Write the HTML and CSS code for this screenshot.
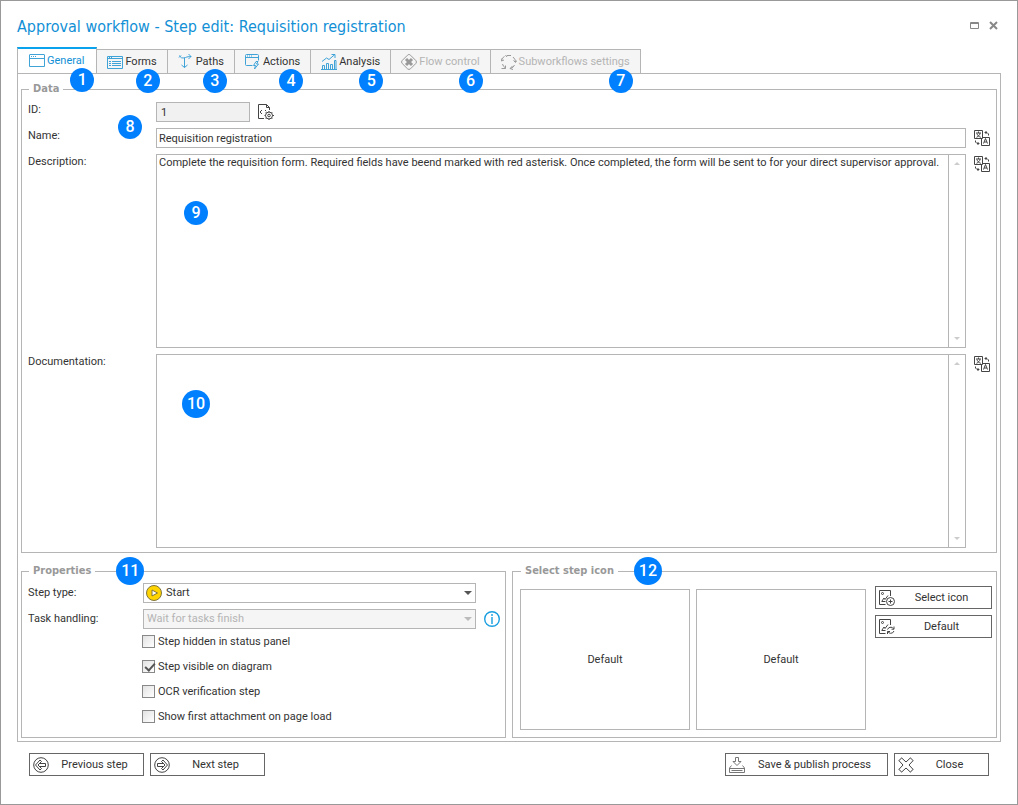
FILE: index.html
```html
<!DOCTYPE html>
<html lang="en">
<head>
<meta charset="utf-8">
<title>Approval workflow - Step edit</title>
<link rel="stylesheet" href="styles.css">
</head>
<body>
<svg class="defs" aria-hidden="true">
  <symbol id="translate" viewBox="0 0 16 16">
    <path d="M.5.5h8v8h-8zM7.500 8.500v7h8v-8h-7" />
    <path d="M2 3h5M4.500 1.500V3M2.500 7.300C4.500 6.300 6 5 6 3M3 3.500c.3 1.800 2 3.200 3.800 3.800M9.500 13.500l2-5 2 5M10.200 12h2.600" />
    <path d="M14.500 5.500V4L13 2.500h-2M12.500 1L11 2.500 12.500 4M1.500 10.500V12L3 13.500h2M3.500 12L5 13.500 3.500 15" />
  </symbol>
  <symbol id="picture" viewBox="0 0 16 16">
    <path d="M11.500 6V.5H.5v14h6" />
    <path d="M2.500 3.500a1 1 0 1 0 2 0 1 1 0 1 0-2 0M2.500 11.500h4M3 11l2-3 1 1.500 3-4" />
  </symbol>
  <symbol id="up" viewBox="0 0 6 3"><path d="M0 3l3-3 3 3z" /></symbol>
  <symbol id="down" viewBox="0 0 8 4"><path d="M0 0h8L4 4z" /></symbol>
</svg>
<main class="window">
  <header class="titlebar">
    <h1 class="title">Approval workflow - Step edit: Requisition registration</h1>
    <div class="controls">
      <button class="control" type="button" aria-label="Maximize"><svg class="i10" viewBox="0 0 10 10"><path d="M.5 1.500h8v6h-8zM.5 2.500h8" /></svg></button>
      <button class="control" type="button" aria-label="Close window"><svg class="i10 thick" viewBox="0 0 10 10"><path d="M1 1l7 7M8 1L1 8" /></svg></button>
    </div>
  </header>

  <nav class="tabs">
    <button class="tab active" type="button"><svg class="icon blue" viewBox="0 0 16 16"><path d="M.5 2v11.500h15V2a.5.5 0 0 0-.5-.5H1a.5.5 0 0 0-.5.5zM.5 5.500h15M2 3.500h1M4 3.500h1M6 3.500h1" /></svg>General<span class="badge">1</span></button>
    <button class="tab" type="button"><svg class="icon blue" viewBox="0 0 16 16"><path d="M.5 2.500h15v12H.5zM.5 4.500h15M2 7.500h2M2 9.500h2M2 11.500h2M5 7.500h9M5 9.500h9M5 11.500h9M2 3.500h1M4 3.500h1" /></svg>Forms<span class="badge">2</span></button>
    <button class="tab" type="button"><svg class="icon blue" viewBox="0 0 16 16"><path d="M1.500 1.500c1 2.500 2.500 3 6 2 2-.7 3-1 5.500-1M10.500 0l2.500 2.500L10.500 5M6.500 4v9.500M3.500 11l3 2.500 3-2.500M1 3.500l2-2" /></svg>Paths<span class="badge">3</span></button>
    <button class="tab" type="button"><svg class="icon blue" viewBox="0 0 16 16"><path d="M7.500 11.500h-6a1 1 0 0 1-1-1v-9a1 1 0 0 1 1-1h11a1 1 0 0 1 1 1v5M.5 3.500h13M2 2h1M4 2h1M6 2h1M11 7.500l-2.500 4h2L9.500 15l4-5h-2l1.500-2.500z" /></svg>Actions<span class="badge">4</span></button>
    <button class="tab" type="button"><svg class="icon blue" viewBox="0 0 16 16"><path d="M0 15.500h16M1.500 15v-3.500h2V15M5.500 15V9.500h2V15M9.500 15v-4.500h2V15M13.500 15V6.500h1.500V15M1 7.500L5.500 4 8 5.500 13.500.8M10.500.5H14V4" /></svg>Analysis<span class="badge">5</span></button>
    <button class="tab" type="button" disabled><svg class="icon grey" viewBox="0 0 16 16"><path d="M8 .5q1 0 1.500.7l5.300 5.300q1.400 1.500 0 3l-5.300 5.300q-1.500 1.400-3 0L1.200 9.500q-1.400-1.500 0-3L6.500 1.200Q7 .5 8 .5z" /><path class="cross" d="M5 5l6 6M11 5l-6 6" /></svg>Flow control<span class="badge">6</span></button>
    <button class="tab" type="button" disabled><svg class="icon grey" viewBox="0 0 16 16"><path d="M6 1.500h4M4.500 1L6 3M12 3q2.500 2 2.500 5M12.500 6.500l2 2 1.300-2M13.500 11q-1 2.500-4 3.500M11.500 12l-2.500 2.500 3 1M4.500 14Q2 12.500 1.500 10M.5 14.500h4v-3M.5 6.500Q1 3.500 3.500 2.500M0 4.500l.5 2.500L3 6" /></svg>Subworkflows settings<span class="badge">7</span></button>
  </nav>

  <section class="panel">
    <fieldset class="group data">
      <legend>Data</legend>
      <label class="row" for="id">ID:</label>
      <div class="idline">
        <input class="field id" id="id" value="1" readonly>
        <svg class="icon dark" viewBox="0 0 16 16"><path d="M6 14.500H.5V.5h8l3 3V6M8.500.5v3h3M4 6L2 8l2 2M7 6l1.200 1.200" /><circle cx="11" cy="11.500" r="3.500" /><circle cx="11" cy="11.500" r="1.300" /><path d="M11 7v1.200M11 14.800V16M6.500 11.500h1M14.500 11.500h1.500M7.800 8.300l.8.8M13.400 13.900l.8.8M14.200 8.300l-.8.8M8.600 13.900l-.8.8" /></svg>
      </div>
      <label class="row" for="name">Name:<span class="badge name-mark">8</span></label>
      <input class="field" id="name" value="Requisition registration">
      <svg class="icon dark mid"><use href="#translate" /></svg>
      <label class="row" for="desc">Description:</label>
      <div class="area">
        <textarea id="desc">Complete the requisition form. Required fields have beend marked with red asterisk. Once completed, the form will be sent to for your direct supervisor approval.</textarea>
        <div class="scroll"><svg class="arrow"><use href="#up" /></svg><svg class="arrow"><use href="#down" /></svg></div>
        <span class="badge desc-mark">9</span>
      </div>
      <svg class="icon dark top"><use href="#translate" /></svg>
      <label class="row" for="docs">Documentation:</label>
      <div class="area">
        <textarea id="docs"></textarea>
        <div class="scroll"><svg class="arrow"><use href="#up" /></svg><svg class="arrow"><use href="#down" /></svg></div>
        <span class="badge wide docs-mark">10</span>
      </div>
      <svg class="icon dark top"><use href="#translate" /></svg>
    </fieldset>

    <div class="lower">
      <fieldset class="group props">
        <legend>Properties<span class="badge wide legend-mark">11</span></legend>
        <div class="prop">
          <label for="type">Step type:</label>
          <div class="pick">
            <select class="with-icon" id="type"><option>Start</option></select>
            <svg class="play" viewBox="0 0 16 16"><circle cx="8" cy="8" r="7.500" /><path d="M6 5v6l5.500-3z" /></svg>
            <svg class="caret"><use href="#down" /></svg>
          </div>
        </div>
        <div class="prop">
          <label for="task">Task handling:</label>
          <div class="pick off">
            <select id="task" disabled><option>Wait for tasks finish</option></select>
            <svg class="caret"><use href="#down" /></svg>
          </div>
          <svg class="icon info" viewBox="0 0 16 16"><circle cx="8" cy="8" r="7.300" /><path d="M8 6v7M8 3v2" /></svg>
        </div>
        <div class="checks">
          <label class="check"><input type="checkbox">Step hidden in status panel</label>
          <label class="check"><input type="checkbox" checked>Step visible on diagram</label>
          <label class="check"><input type="checkbox">OCR verification step</label>
          <label class="check"><input type="checkbox">Show first attachment on page load</label>
        </div>
      </fieldset>
      <fieldset class="group icons">
        <legend>Select step icon<span class="badge wide legend-mark">12</span></legend>
        <div class="preview">Default</div>
        <div class="preview">Default</div>
        <div class="stack">
          <button class="btn" type="button"><svg class="icon dark" viewBox="0 0 16 16"><use href="#picture" /><circle cx="11.500" cy="11.500" r="4" /><path d="M9.500 11.500h4M11.500 9.500v4" /></svg><span>Select icon</span></button>
          <button class="btn" type="button"><svg class="icon dark" viewBox="0 0 16 16"><use href="#picture" /><path d="M8.500 10.500q1-2.500 3.500-2.300 1.500 0 2.500 1.500M15 7.500v2.700h-2.500M15 12q-1 2.500-3.500 2.300-1.500 0-2.500-1.500M8.500 15v-2.500H11" /></svg><span>Default</span></button>
        </div>
      </fieldset>
    </div>
  </section>

  <footer class="footer">
    <button class="btn step" type="button"><svg class="icon dark" viewBox="0 0 16 16"><circle cx="8" cy="8" r="7.300" /><path d="M7 3L2.500 8 7 13l1.500-1.500L6.500 9.500h6v-3h-6l2-2zM8 5L5 8l3 3" /></svg><span>Previous step</span></button>
    <button class="btn step" type="button"><svg class="icon dark" viewBox="0 0 16 16"><circle cx="8" cy="8" r="7.300" /><path d="M9 3l4.500 5L9 13l-1.500-1.500 2-2h-6v-3h6l-2-2zM8 5l3 3-3 3" /></svg><span>Next step</span></button>
    <button class="btn save" type="button"><svg class="icon mild" viewBox="0 0 16 16"><path d="M6.500.5h3v4H12L8 8.500l-4-4h2.500zM2.500 8.500L.5 11v4.500h15V11l-2-2.500M.5 11.500h15M2.500 13.500h11" /></svg><span>Save &amp; publish process</span></button>
    <button class="btn close" type="button"><svg class="icon dark" viewBox="0 0 16 16"><path d="M3.500.8L8 5 12.500.8q.8 1.700 2.700 2.700L11 8l4.200 4.500q-1.900.8-2.700 2.700L8 11l-4.500 4.200Q2.700 13.300.8 12.500L5 8 .8 3.500Q2.700 2.700 3.500.8z" /></svg><span>Close</span></button>
  </footer>
</main>
</body>
</html>
```
FILE: styles.css
```css
* { box-sizing: border-box; }
body { margin: 0; background: #fff; }
body, button, input, select, textarea {
  font: 11px/14px Roboto, "Liberation Sans", sans-serif;
  color: #333;
}
svg { display: block; fill: none; stroke: currentColor; stroke-width: 1; }
.defs { position: absolute; width: 0; height: 0; }
.icon { width: 16px; height: 16px; flex: none; }
.blue { color: #3fa3d8; }
.grey { color: #999; }
.dark { color: #444; }
.mild { color: #777; }
.cross { stroke-width: 3; }

.window {
  min-height: 100vh;
  padding: 12px 16px 28px;
  border: 1px solid #999;
  display: flex;
  flex-direction: column;
}
.titlebar { display: flex; justify-content: space-between; height: 34px; }
.title {
  margin: 0;
  font: 400 16px/28px "DejaVu Sans Condensed", "Noto Sans", sans-serif;
  color: #1290d6;
}
.controls { display: flex; gap: 9px; height: 26px; align-items: center; padding-right: 2px; }
.control { padding: 0; border: 0; background: none; color: #888; }
.i10 { width: 10px; height: 10px; }
.thick { stroke-width: 2; }

.tabs { display: flex; align-items: flex-end; }
.tab {
  position: relative;
  display: flex;
  align-items: center;
  gap: 2px;
  height: 24px;
  padding: 0 10px;
  border: 1px solid #b5b5b5;
  border-width: 1px 1px 0 0;
  background: #f5f5f5;
  white-space: nowrap;
}
.tab:disabled { color: #b4b4b4; }
.tab.active {
  height: 26px;
  padding: 0 12px 0 11px;
  border-top: 2px solid #0aa2ed;
  border-left-width: 1px;
  background: #fff;
  color: #1290d6;
}
.badge {
  position: absolute;
  z-index: 1;
  width: 24px;
  height: 24px;
  border-radius: 50%;
  background: #0080ff;
  color: #fff;
  font: 500 16px/24px Roboto, sans-serif;
  text-align: center;
}
.badge.wide { width: 28px; height: 28px; line-height: 28px; }
.tab .badge { right: 7px; top: 19px; }
.tab.active .badge { right: 2px; }
.name-mark { left: 90px; top: -13px; }
.desc-mark { left: 27px; top: 46px; }
.docs-mark { left: 25px; top: 35px; }
.legend-mark { left: 100%; top: -7px; margin-left: 16px; }
.props .legend-mark { margin-left: 21px; }

.panel {
  flex: 1;
  display: flex;
  flex-direction: column;
  gap: 11px;
  padding: 8px 3px 3px;
  border: 1px solid #b5b5b5;
}
.group { margin: 0; min-width: 0; border: 1px solid #b5b5b5; }
.group legend {
  position: relative;
  margin-left: 1px;
  padding: 0 4px;
  font: 700 11px/14px "DejaVu Sans Condensed", "Noto Sans", sans-serif;
  color: #999;
}
.data {
  flex: 1;
  display: grid;
  grid-template: 20px 20px auto auto / 120px 1fr 16px;
  gap: 6px 8px;
  padding: 6px 6px 4px;
}
.row { position: relative; grid-column: 1; padding-top: 1px; }
.idline { display: flex; align-items: center; gap: 8px; }
.field {
  width: 100%;
  height: 20px;
  padding: 0 2px;
  border: 1px solid #b5b5b5;
}
.field.id { width: 94px; padding: 0 4px; background: #f1f1f1; }
.mid { align-self: center; }
.top { margin-top: 2px; }
.area { position: relative; display: flex; min-height: 194px; border: 1px solid #b5b5b5; }
.area textarea {
  flex: 1;
  min-width: 0;
  padding: 1px 2px;
  border: 0;
  resize: none;
  overflow: hidden;
}
.scroll {
  width: 17px;
  padding: 7px 5px;
  border-left: 1px solid #b5b5b5;
  display: flex;
  flex-direction: column;
  justify-content: space-between;
}
.arrow { width: 6px; height: 3px; fill: #ccc; stroke: none; }

.lower { display: grid; grid-template-columns: 1fr 1fr; gap: 6px; }
.props { padding: 5px 5px 8px 6px; }
.prop {
  display: grid;
  grid-template-columns: 115px 1fr 16px;
  align-items: center;
}
.prop + .prop { margin-top: 6px; }
.pick { position: relative; margin-right: 8px; }
.pick select {
  display: block;
  appearance: none;
  width: 100%;
  height: 20px;
  padding: 0 3px;
  border: 1px solid #b5b5b5;
  border-radius: 0;
  background: #fff;
}
.pick .with-icon { padding-left: 22px; }
.pick.off select { background: #f5f5f5; color: #b4b4b4; opacity: 1; }
.play { position: absolute; left: 3px; top: 2px; width: 16px; height: 16px; fill: #ffd400; color: #80743a; }
.play path { fill: #fff; }
.caret { position: absolute; right: 4px; top: 8px; width: 8px; height: 4px; fill: #555; stroke: none; }
.off .caret { fill: #bbb; }
.info { color: #199ee0; stroke-width: 1.4; }
.checks { padding-left: 114px; }
.check { display: flex; align-items: center; gap: 3px; height: 25px; }
.check input {
  appearance: none;
  width: 13px;
  height: 13px;
  margin: 0;
  border: 1px solid #888;
  background: linear-gradient(135deg, #e2e2e2, #fff);
  position: relative;
}
.check input:checked::after {
  content: "";
  position: absolute;
  left: 4px;
  top: 0;
  width: 4px;
  height: 8px;
  border: solid #555;
  border-width: 0 2px 2px 0;
  transform: rotate(42deg);
}
.icons { display: flex; padding: 8px 4px 7px 7px; }
.preview {
  flex: 1;
  display: flex;
  align-items: center;
  justify-content: center;
  margin: 3px 6px 0 0;
  border: 1px solid #b5b5b5;
}
.stack { display: flex; flex-direction: column; gap: 6px; width: 117px; margin-left: 3px; }
.btn {
  display: flex;
  align-items: center;
  height: 23px;
  padding: 0 3px;
  border: 1px solid #666;
  background: #fff;
}
.btn span { flex: 1; text-align: center; white-space: nowrap; }
.footer { display: flex; gap: 6px; padding: 11px 12px 0; }
.step { width: 115px; }
.save { width: 163px; margin-left: auto; }
.close { width: 95px; }
```
